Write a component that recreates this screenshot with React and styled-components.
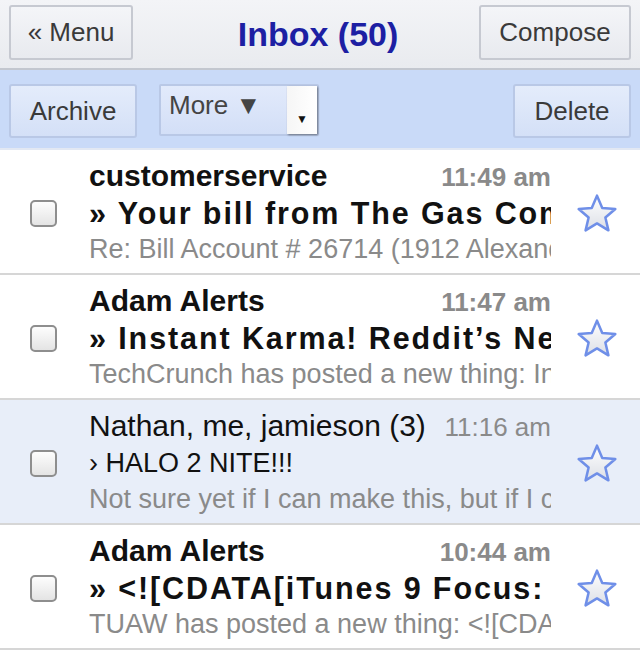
import React from "react"
import styled, { createGlobalStyle } from 'styled-components'

const GlobalStyle = createGlobalStyle`
  html, body {
    margin: 0;
    padding: 0;
    background: #fff;
    font-family: "Liberation Sans", Arial, sans-serif;
  }
`

const Page = styled.div`
  width: 640px;
  overflow: hidden;
`

const TopBar = styled.div`
  height: 70px;
  display: flex;
  align-items: center;
  justify-content: space-between;
  padding: 5px 9px 8px;
  box-sizing: border-box;
  background: linear-gradient(#f3f4f7, #e9ebef);
  border-bottom: 2px solid #c3c7cf;
`

const Title = styled.div`
  font-size: 34px;
  font-weight: bold;
  color: #1d1fa3;
  padding-top: 3px;
  margin-left: 24px;
`

const Button = styled.div`
  height: ${p => p.blue ? 54 : 55}px;
  box-sizing: border-box;
  display: flex;
  align-items: center;
  justify-content: center;
  width: ${p => p.w}px;
  font-size: 26px;
  color: #3a3a3a;
  border: 2px solid ${p => p.blue ? '#b9c8e6' : '#c6c9d1'};
  border-radius: 3px;
  background: ${p => p.blue
    ? 'linear-gradient(#e4ecfb, #d4e0f7)'
    : 'linear-gradient(#f4f5f8, #e8eaef)'};
`

const ActionBar = styled.div`
  height: 80px;
  display: flex;
  align-items: flex-start;
  padding: 14px 9px 10px;
  box-sizing: border-box;
  background: #c9daf8;
  border-bottom: 2px solid #e2e8f3;
`

const Select = styled.div`
  margin-left: 22px;
  width: 160px;
  height: 52px;
  box-sizing: border-box;
  display: flex;
  border: 2px solid #b9c8e6;
  border-radius: 2px;
  background: linear-gradient(#e2eafb, #d3dff7);
`

const SelectLabel = styled.div`
  flex: 1;
  font-size: 26px;
  color: #444;
  padding: 4px 0 0 8px;
`

const SelectArrow = styled.div`
  width: 30px;
  background: linear-gradient(90deg, #f6f6f6, #fff);
  box-shadow: 1px 1px 2px rgba(0, 0, 0, 0.45);
  display: flex;
  align-items: center;
  justify-content: center;
  padding-top: 18px;
  box-sizing: border-box;
  font-size: 12px;
  color: #111;
`

const Spacer = styled.div`
  flex: 1;
`

const Row = styled.div`
  display: flex;
  align-items: stretch;
  background: ${p => p.read ? '#e8eef9' : '#fff'};
  border-bottom: 2px solid #d6d6d6;
  padding: 8px 0 7px;
`

const CheckCell = styled.div`
  width: 89px;
  display: flex;
  justify-content: center;
  padding-top: 42px;
  padding-right: 2px;
  box-sizing: border-box;
`

const Checkbox = styled.div`
  width: 27px;
  height: 27px;
  box-sizing: border-box;
  border: 2px solid #8e8e8e;
  border-radius: 5px;
  background: linear-gradient(#fdfdfd, #e4e4e4);
`

const Body = styled.div`
  width: 462px;
  overflow: hidden;
  white-space: nowrap;
`

const Head = styled.div`
  display: flex;
  justify-content: space-between;
  align-items: baseline;
  height: 36px;
  line-height: 36px;
`

const Sender = styled.span`
  font-size: 30px;
  font-weight: ${p => p.read ? 'normal' : 'bold'};
  color: #111;
`

const Time = styled.span`
  font-size: 26px;
  font-weight: ${p => p.read ? 'normal' : 'bold'};
  color: #8a8a8a;
`

const Subject = styled.div`
  font-size: ${p => p.read ? 27 : 30.5}px;
  letter-spacing: ${p => p.read ? 0 : 1.9}px;
  line-height: 38px;
  font-weight: ${p => p.read ? 'normal' : 'bold'};
  color: #111;
`

const Snippet = styled.div`
  font-size: 27px;
  line-height: 34px;
  color: #8a8a8a;
`

const StarCell = styled.div`
  flex: 1;
  display: flex;
  justify-content: center;
  padding-top: 34px;
  padding-left: 2px;
`

const Star = () => (
  <svg width="44" height="44" viewBox="0 0 42 42">
    <defs>
      <linearGradient id="sg" x1="0" y1="0" x2="0" y2="1">
        <stop offset="0" stopColor="#ffffff" />
        <stop offset="1" stopColor="#dcdfe6" />
      </linearGradient>
    </defs>
    <path
      d="M21 3.5 L26 15.2 L38.5 16.2 L29 24.4 L31.9 36.6 L21 30 L10.1 36.6 L13 24.4 L3.5 16.2 L16 15.2 Z"
      fill="url(#sg)"
      stroke="#6f8fe8"
      strokeWidth="2.4"
      strokeLinejoin="round"
    />
  </svg>
)

const messages = [
  { from: 'customerservice', time: '11:49 am', subject: '» Your bill from The Gas Company', snippet: 'Re: Bill Account # 26714 (1912 Alexander St)' },
  { from: 'Adam Alerts', time: '11:47 am', subject: '» Instant Karma! Reddit\u2019s New', snippet: 'TechCrunch has posted a new thing: Instant' },
  { from: 'Nathan, me, jamieson (3)', time: '11:16 am', subject: '› HALO 2 NITE!!!', snippet: 'Not sure yet if I can make this, but if I can', read: true },
  { from: 'Adam Alerts', time: '10:44 am', subject: '» <![CDATA[iTunes 9 Focus: The', snippet: 'TUAW has posted a new thing: <![CDATA[' },
]

const App = () => {
  return (
    <>
      <GlobalStyle />
      <Page>
        <TopBar>
          <Button w={124}>« Menu</Button>
          <Title>Inbox (50)</Title>
          <Button w={152}>Compose</Button>
        </TopBar>
        <ActionBar>
          <Button blue w={128}>Archive</Button>
          <Select>
            <SelectLabel>More ▼</SelectLabel>
            <SelectArrow>▼</SelectArrow>
          </Select>
          <Spacer />
          <Button blue w={118}>Delete</Button>
        </ActionBar>
        {messages.map((m, i) => (
          <Row key={i} read={m.read}>
            <CheckCell><Checkbox /></CheckCell>
            <Body>
              <Head>
                <Sender read={m.read}>{m.from}</Sender>
                <Time read={m.read}>{m.time}</Time>
              </Head>
              <Subject read={m.read}>{m.subject}</Subject>
              <Snippet>{m.snippet}</Snippet>
            </Body>
            <StarCell><Star /></StarCell>
          </Row>
        ))}
      </Page>
    </>
  )
}

export default App
